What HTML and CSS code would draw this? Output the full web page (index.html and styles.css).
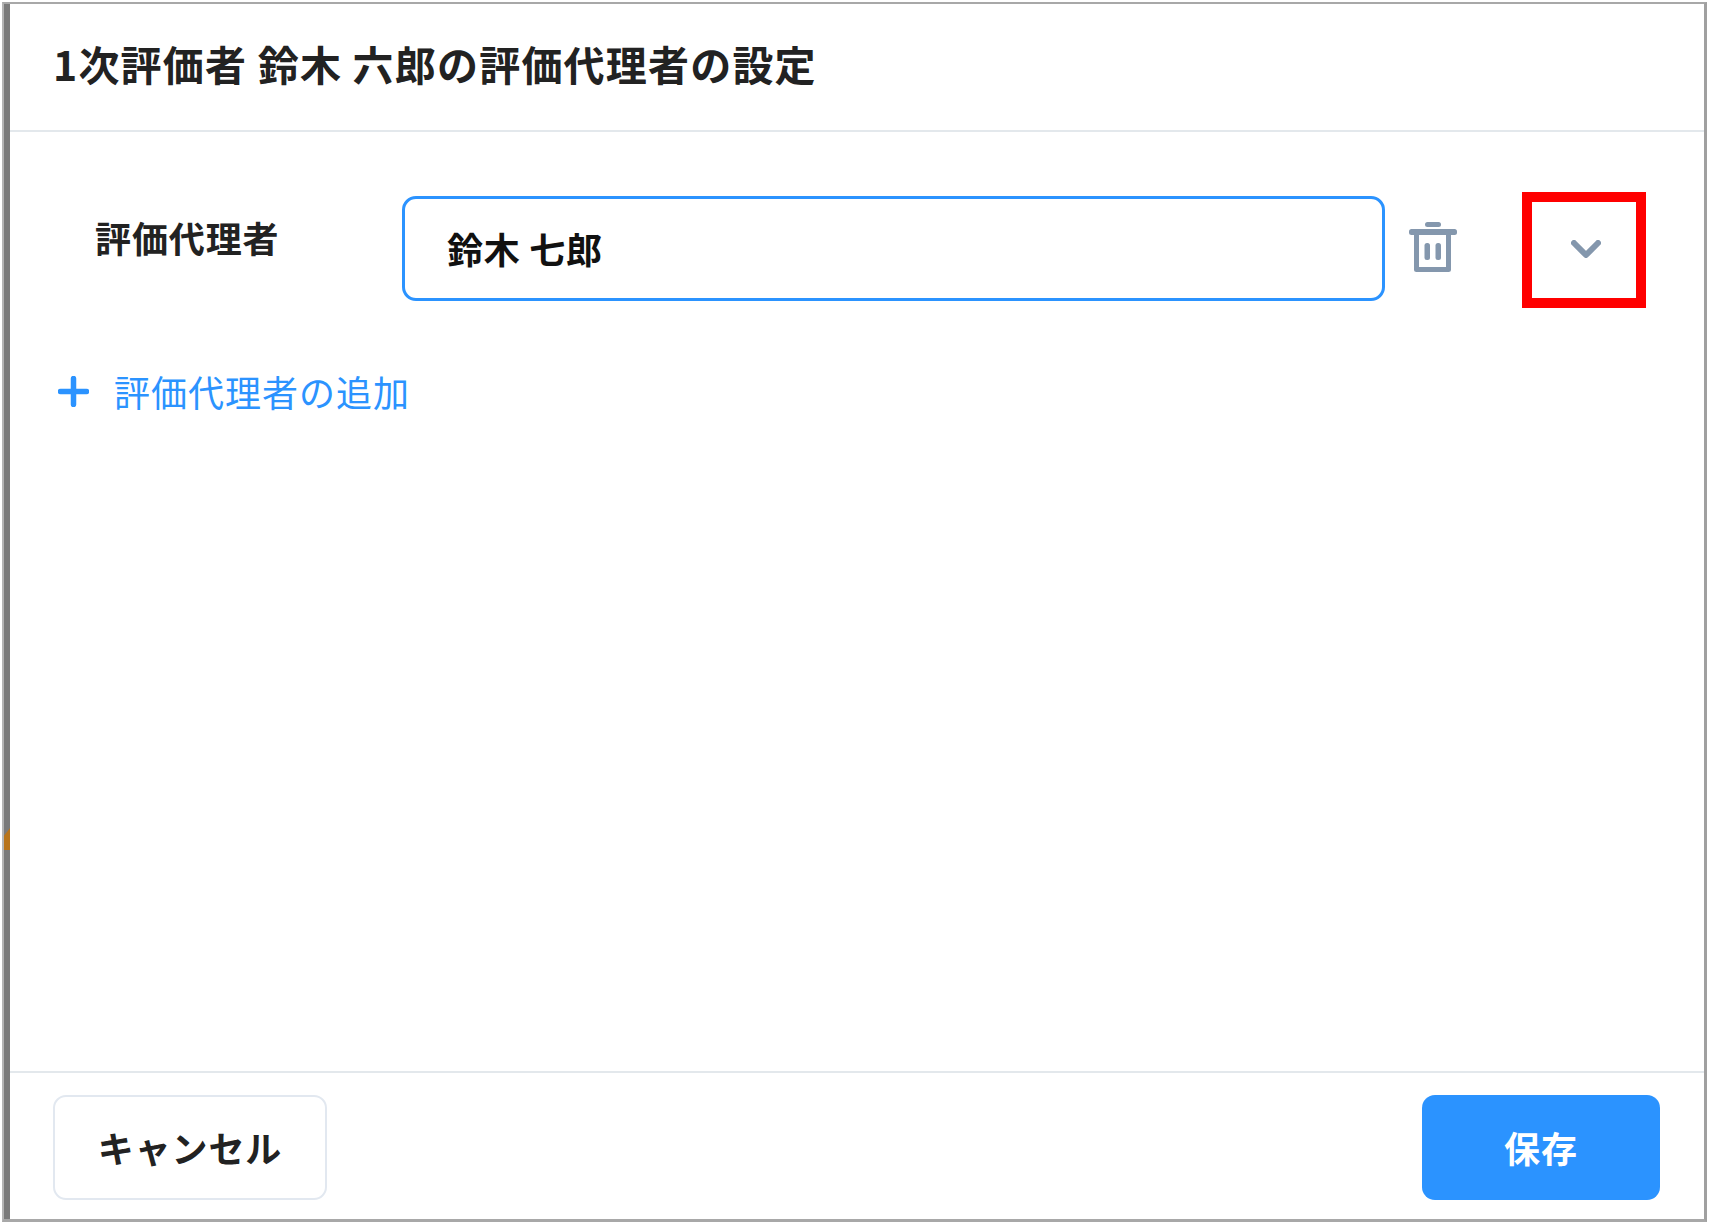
FILE: index.html
```html
<!DOCTYPE html>
<html lang="ja">
<head>
<meta charset="utf-8">
<title>評価代理者の設定</title>
<link rel="stylesheet" href="styles.css">
</head>
<body>
<div class="screen">
  <span class="scrap"></span>
  <div class="dialog">
    <header class="dialog-head">
      <h1 class="dialog-title">1次評価者 鈴木 六郎の評価代理者の設定</h1>
    </header>
    <main class="dialog-body">
      <div class="delegate-row">
        <div class="delegate-label">評価代理者</div>
        <div class="delegate-input">鈴木 七郎</div>
        <button class="icon-btn trash-btn" type="button" aria-label="削除">
          <svg class="trash-icon" viewBox="0 0 48 50" width="48" height="50">
            <rect x="16" y="0" width="16" height="5" rx="2.5"/>
            <rect x="0" y="7" width="48" height="6" rx="2.5"/>
            <path d="M7.500 13V47.500H39.500V13" class="trash-body"/>
            <rect x="15.500" y="21" width="5.500" height="17" rx="2.500"/>
            <rect x="26.500" y="21" width="5.500" height="17" rx="2.500"/>
          </svg>
        </button>
        <div class="highlight">
          <svg class="chevron-icon" viewBox="0 0 30 18" width="30" height="18">
            <path d="M3 3L15 15L27 3"/>
          </svg>
        </div>
      </div>
      <a class="add-link" href="#">
        <svg class="plus-icon" viewBox="0 0 31 31" width="31" height="31">
          <path d="M15.500 2.500V28.500M2.500 15.500H28.500"/>
        </svg>
        <span>評価代理者の追加</span>
      </a>
    </main>
    <footer class="dialog-foot">
      <button class="btn btn-cancel" type="button">キャンセル</button>
      <button class="btn btn-save" type="button">保存</button>
    </footer>
  </div>
</div>
</body>
</html>
```
FILE: styles.css
```css
* { box-sizing: border-box; }
html, body { margin: 0; padding: 0; background: #fff; }
body {
  width: 1709px;
  height: 1223px;
  padding: 2px 2px 1px 2px;
  font-family: "Noto Sans CJK JP", "Noto Sans", sans-serif;
  color: #222;
}
.screen {
  position: relative;
  height: 100%;
  border-top: 2px solid #a8a8a8;
  border-left: 2px solid #b4b4b4;
  border-right: 3px solid #a0a0a0;
  border-bottom: 3px solid #a8a8a8;
}
.scrap {
  position: absolute;
  left: 0;
  top: 824px;
  width: 6px;
  height: 22px;
  background: #b8741a;
  clip-path: polygon(100% 0, 100% 100%, 0 100%, 0 35%);
}
.dialog {
  height: 100%;
  display: flex;
  flex-direction: column;
  border-left: 6px solid #7a7a7a;
  background: #fff;
}
.dialog-head {
  height: 128px;
  flex: none;
  display: flex;
  align-items: center;
  padding: 0 43px;
  border-bottom: 2px solid #e3e8ec;
}
.dialog-title {
  margin: 0;
  font-size: 41px;
  font-weight: 700;
  letter-spacing: 1.2px;
  line-height: 1.2;
  position: relative;
  top: -3px;
}
.dialog-body {
  flex: 1;
  display: flex;
  flex-direction: column;
  padding: 60px 0 0 48px;
}
.delegate-row {
  display: flex;
  align-items: flex-start;
  height: 116px;
}
.delegate-label {
  width: 344px;
  padding: 23px 0 0 37px;
  font-size: 36px;
  font-weight: 700;
  line-height: 44px;
  letter-spacing: 0.9px;
}
.delegate-input {
  width: 983px;
  height: 105px;
  margin-top: 4px;
  padding: 0 0 2px 42px;
  display: flex;
  align-items: center;
  border: 3px solid #2b93ff;
  border-radius: 14px;
  font-size: 36px;
  font-weight: 700;
  letter-spacing: 0.7px;
  color: #111;
}
.icon-btn {
  border: 0;
  padding: 0;
  background: none;
  display: flex;
}
.trash-btn { margin: 30px 0 0 24px; }
.trash-icon { fill: #8497ad; }
.trash-body { fill: none; stroke: #8497ad; stroke-width: 5; stroke-linejoin: round; }
.highlight {
  width: 124px;
  height: 116px;
  margin-left: 65px;
  border: 10px solid #ff0000;
  display: flex;
  align-items: center;
  justify-content: center;
  padding: 0 0 3px 4px;
}
.chevron-icon { fill: none; stroke: #8497ad; stroke-width: 6; stroke-linecap: round; stroke-linejoin: round; }
.add-link {
  display: flex;
  align-items: center;
  gap: 25px;
  margin-top: 59px;
  color: #2b93ff;
  font-size: 36px;
  letter-spacing: 1px;
  line-height: 48px;
  text-decoration: none;
}
.plus-icon { fill: none; stroke: #2b93ff; stroke-width: 5.500; stroke-linecap: round; }
.dialog-foot {
  flex: none;
  height: 148px;
  display: flex;
  justify-content: space-between;
  align-items: flex-start;
  padding: 22px 44px 0 43px;
  border-top: 2px solid #e3e8ec;
}
.btn {
  height: 105px;
  padding: 0 0 2px;
  font-family: inherit;
  font-size: 36px;
  font-weight: 700;
  letter-spacing: 0.9px;
  border-radius: 13px;
}
.btn-cancel {
  width: 274px;
  background: #fff;
  border: 2.500px solid #e2e8f0;
  color: #222;
}
.btn-save {
  width: 238px;
  background: #2b93ff;
  border: 0;
  color: #fff;
}
```
